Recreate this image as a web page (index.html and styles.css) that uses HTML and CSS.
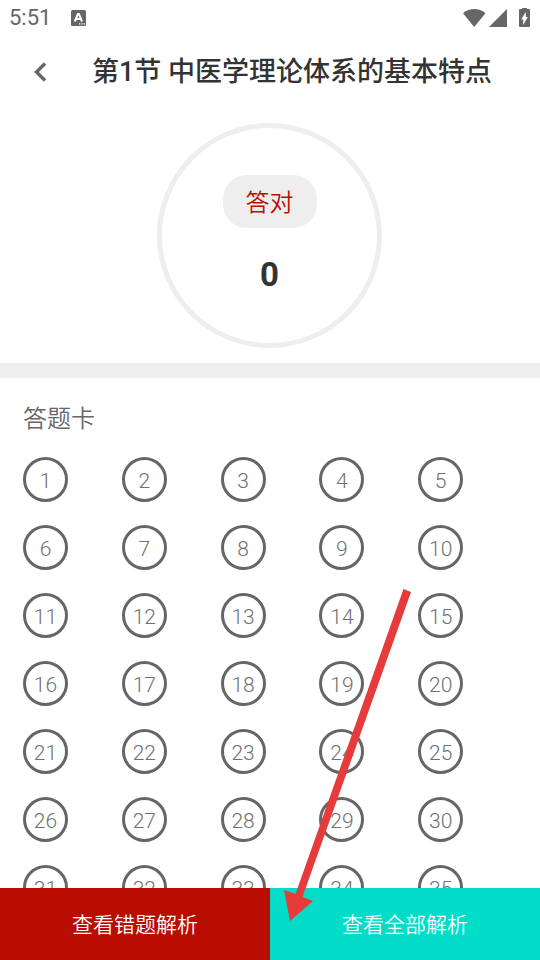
FILE: index.html
```
<!DOCTYPE html>
<html lang="zh-CN">
<head>
<meta charset="utf-8">
<meta name="viewport" content="width=device-width, initial-scale=1">
<title>第1节 中医学理论体系的基本特点</title>
<link rel="stylesheet" href="styles.css">
</head>
<body>
<div class="app">
  <div class="status">
    <span class="clock">5:51</span>
    <svg class="notice" width="15" height="16" viewBox="0 0 15 16" aria-hidden="true">
      <rect width="15" height="16" rx="1.500" fill="#666"/>
      <path d="M3.800 11.500 6.900 4h1l3.100 7.500M5.200 9h4.500" fill="none" stroke="#fff" stroke-width="2"/>
      <path d="M8 13.200h1.300v1.300H8zM10.300 13.200h1.300v1.300h-1.300zM12.600 13.200h1.300v1.300h-1.300z" fill="#fff"/>
    </svg>
    <svg class="signals" width="68" height="20" viewBox="0 0 68 20" aria-hidden="true">
      <path d="M0 5.200C6.500-.4 16-.4 22.500 5.200L11.200 19z" fill="#666"/>
      <path d="M26 19 44 1v18z" fill="#666"/>
      <path d="M59-1h5v2h2q1 0 1 1v16q0 1-1 1h-9q-1 0-1-1v-16q0-1 1-1h2z" fill="#666"/>
      <path d="M62.800 4v5h2L60.200 17v-5.500H58.200z" fill="#fff"/>
    </svg>
  </div>
  <header class="header">
    <button class="back" type="button" aria-label="返回">
      <svg width="14" height="20" viewBox="0 0 14 20" aria-hidden="true"><path d="M12 1.500 3.500 10l8.500 8.500" fill="none" stroke="#666" stroke-width="3.400"/></svg>
    </button>
    <h1 class="title">第1节 中医学理论体系的基本特点</h1>
  </header>
  <section class="result">
    <div class="ring">
      <span class="label">答对</span>
      <strong class="score">0</strong>
    </div>
  </section>
  <main class="card">
    <h2 class="card-title">答题卡</h2>
    <div class="grid" id="grid"></div>
  </main>
  <footer class="actions">
    <button class="action wrong" type="button">查看错题解析</button>
    <button class="action all" type="button">查看全部解析</button>
  </footer>
  <svg class="arrow" width="30" height="333" viewBox="0 0 30 333" aria-hidden="true">
    <path d="M119.500 0 127 3 18.500 308 29 312 6 332 0 301 11.500 305z" fill="#e53b3b"/>
  </svg>
</div>
<script src="script.js"></script>
</body>
</html>
```
FILE: script.js
```
const grid = document.getElementById('grid');
for (let n = 1; n <= 35; n += 1) {
  const button = document.createElement('button');
  button.type = 'button';
  button.className = 'number';
  button.textContent = n;
  grid.append(button);
}
```
FILE: styles.css
```
* { box-sizing: border-box; }
body {
  margin: 0;
  background: #fff;
  color: #666;
  font-family: Roboto, "Noto Sans CJK SC", sans-serif;
}
button {
  margin: 0;
  padding: 0;
  border: 0;
  background: none;
  color: inherit;
  font: inherit;
}
.app {
  position: relative;
  display: flex;
  flex-direction: column;
  height: 100vh;
  overflow: hidden;
}
.status {
  display: flex;
  flex: none;
  align-items: center;
  height: 36px;
  padding: 0 9px;
}
.clock { font-size: 22px; line-height: 36px; }
.notice { margin-left: 20px; }
.signals { margin-left: auto; }
.header {
  display: flex;
  flex: none;
  align-items: center;
  height: 72px;
  padding: 0 12px;
}
.back {
  display: flex;
  align-items: center;
  justify-content: center;
  width: 56px;
  height: 48px;
}
.title {
  flex: 1;
  margin: 0;
  padding-right: 12px;
  color: #333;
  font-size: 27px;
  font-weight: 500;
  line-height: 40px;
  text-align: center;
  white-space: nowrap;
}
.result {
  display: flex;
  flex: none;
  justify-content: center;
  padding: 15px 1px 15px 0;
  border-bottom: 15px solid #eee;
}
.ring {
  display: flex;
  flex-direction: column;
  align-items: center;
  width: 225px;
  height: 225px;
  padding-top: 47px;
  border: 5px solid #eee;
  border-radius: 50%;
}
.label {
  padding: 10px 23px 6px;
  border-radius: 24px;
  background: #eee;
  color: #b80d00;
  font-size: 24px;
  font-weight: 350;
  line-height: 37px;
}
.score {
  margin-top: 27px;
  color: #333;
  font-size: 33px;
  line-height: 40px;
}
.card {
  flex: 1;
  min-height: 0;
  padding: 23px 23px 0;
  overflow: hidden;
}
.card-title {
  margin: 0 0 20px;
  font-size: 24px;
  font-weight: 350;
  line-height: 36px;
}
.grid {
  display: grid;
  grid-template-columns: repeat(5, 1fr);
  gap: 23px 0;
}
.number {
  width: 45px;
  height: 45px;
  padding-top: 3px;
  border: 3px solid #666;
  border-radius: 50%;
  color: #707070;
  font-size: 21px;
  font-weight: 350;
  line-height: 36px;
}
.actions { display: flex; flex: none; }
.action {
  flex: 1;
  height: 72px;
  padding-bottom: 2px;
  color: #fff;
  font-size: 21px;
  font-weight: 350;
}
.wrong { background: #b80d00; }
.all { background: #02dcc8; }
.arrow {
  position: absolute;
  bottom: 38px;
  left: calc(50% + 14px);
  overflow: visible;
  pointer-events: none;
}
```
